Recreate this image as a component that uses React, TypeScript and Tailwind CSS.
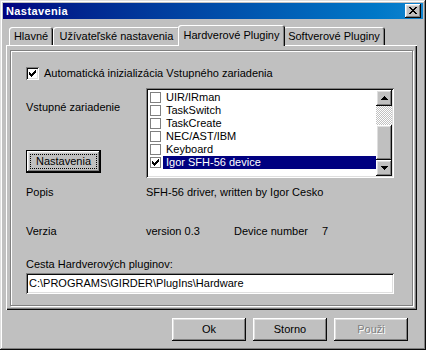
import React from 'react';

const raised =
  'shadow-[inset_-1px_-1px_#0a0a0a,inset_1px_1px_#fff,inset_-2px_-2px_#808080,inset_2px_2px_#dfdfdf]';
const sunken =
  'shadow-[inset_1px_1px_#808080,inset_-1px_-1px_#fff,inset_2px_2px_#0a0a0a,inset_-2px_-2px_#dfdfdf]';

const Check = () => (
  <svg width="7" height="7" viewBox="0 0 7 7" shapeRendering="crispEdges">
    <path d="M6 0h1v3H6v1H5v1H4v1H3v1H2V6H1V5H0V2h1v1h1v1h1V3h1V2h1V1h1z" fill="#000" />
  </svg>
);

const Arrow = ({ down }: { down?: boolean }) => (
  <svg width="7" height="4" viewBox="0 0 7 4" shapeRendering="crispEdges" className={down ? 'rotate-180' : ''}>
    <path d="M3 0h1v1h1v1h1v1h1v1H0V3h1V2h1V1h1z" fill="#000" />
  </svg>
);

const Tab = ({ w, children }: { w: string; children: React.ReactNode }) => (
  <div
    className={`${w} mt-[2px] h-[18px] flex items-center justify-center rounded-t-[3px] shadow-[inset_1px_1px_#fff,inset_-1px_0_#0a0a0a,inset_-2px_0_#808080] whitespace-nowrap`}
  >
    {children}
  </div>
);

const Button = ({ children, disabled }: { children: React.ReactNode; disabled?: boolean }) => (
  <div
    className={`w-[74px] h-[23px] bg-[#c0c0c0] ${raised} flex items-center justify-center ${
      disabled ? 'text-[#808080] [text-shadow:1px_1px_#fff]' : ''
    }`}
  >
    {children}
  </div>
);

const items = ['UIR/IRman', 'TaskSwitch', 'TaskCreate', 'NEC/AST/IBM', 'Keyboard', 'Igor SFH-56 device'];

export default function App() {
  return (
    <div className="w-[426px] h-[350px] bg-[#c0c0c0] p-[3px] flex flex-col font-['Liberation_Sans',Arial,sans-serif] text-[11px] leading-[13px] text-black shadow-[inset_-1px_-1px_#0a0a0a,inset_1px_1px_#dfdfdf,inset_-2px_-2px_#808080,inset_2px_2px_#fff] select-none">
      {/* title bar */}
      <div className="h-[16px] flex items-center justify-between pl-[3px] pr-[2px] bg-linear-to-r from-[#000080] to-[#1084d0]">
        <span className="text-white font-bold tracking-[0.4px]">Nastavenia</span>
        <div className={`w-[16px] h-[14px] bg-[#c0c0c0] ${raised} flex items-center justify-center pb-[1px]`}>
          <svg width="8" height="7" viewBox="0 0 8 7" shapeRendering="crispEdges">
            <path
              d="M0 0h2v1h1v1h2V1h1V0h2v1H7v1H6v1H5v1h1v1h1v1h1v1H6V6H5V5H3v1H2v1H0V6h1V5h1V4h1V3H2V2H1V1H0z"
              fill="#000"
            />
          </svg>
        </div>
      </div>

      {/* tab control */}
      <div className="mt-[6px] ml-[3px] w-[411px] flex flex-col">
        <div className="relative z-10 h-[20px] flex items-start pl-[3px]">
          <Tab w="w-[44px]">Hlavné</Tab>
          <Tab w="w-[127px]">Užívateľské nastavenia</Tab>
          <div className="relative z-10 w-[107px] -mx-[2px] h-[21px] pb-[1px] bg-[#c0c0c0] flex items-center justify-center rounded-t-[3px] shadow-[inset_1px_1px_#fff,inset_-1px_0_#0a0a0a,inset_-2px_0_#808080] whitespace-nowrap">
            Hardverové Pluginy
          </div>
          <Tab w="w-[102px]">Softverové Pluginy</Tab>
        </div>

        <div className="h-[265px] pt-[5px] px-[4px] pb-[4px] flex flex-col shadow-[inset_1px_1px_#fff,inset_-1px_-1px_#0a0a0a,inset_-2px_-2px_#808080]">
          <div className="flex-1 border border-[#808080] shadow-[inset_1px_1px_#fff,1px_1px_#fff] pt-[16px] pl-[15px] flex flex-col">
            <div className="h-[13px] flex items-center">
              <div className={`w-[13px] h-[13px] bg-white ${sunken} flex items-center justify-center`}>
                <Check />
              </div>
              <span className="ml-[5px]">Automatická inizializácia Vstupného zariadenia</span>
            </div>

            <div className="mt-[8px] h-[90px] flex">
              <div className="w-[120px] flex flex-col">
                <span className="mt-[13px]">Vstupné zariadenie</span>
                <div className="mt-auto mb-[5px] w-[75px] h-[23px] border border-black flex">
                  <div className={`flex-1 ${raised} p-[3px] flex`}>
                    <div className="flex-1 border border-dotted border-black flex items-center justify-center">
                      Nastavenia
                    </div>
                  </div>
                </div>
              </div>

              <div className={`w-[248px] h-[90px] bg-white ${sunken} p-[2px] flex`}>
                <div className="flex-1 pt-[1px] flex flex-col">
                  {items.map((label, i) => {
                    const sel = i === items.length - 1;
                    return (
                      <div key={label} className="h-[13px] flex items-center">
                        <div className="ml-[2px] w-[11px] h-[11px] border border-[#808080] bg-white flex items-center justify-center">
                          {sel && <Check />}
                        </div>
                        <div
                          className={`ml-[2px] flex-1 h-[13px] pl-[3px] flex items-center ${
                            sel ? 'bg-[#000080] text-white' : ''
                          }`}
                        >
                          {label}
                        </div>
                      </div>
                    );
                  })}
                </div>
                <div className="w-[16px] flex flex-col">
                  <div className={`h-[16px] bg-[#c0c0c0] ${raised} flex items-center justify-center`}>
                    <Arrow />
                  </div>
                  <div className="h-[19px] bg-[repeating-conic-gradient(#c0c0c0_0_25%,#fff_0_50%)] bg-[length:2px_2px]" />
                  <div className={`h-[35px] bg-[#c0c0c0] ${raised}`} />
                  <div className={`h-[16px] bg-[#c0c0c0] ${raised} flex items-center justify-center`}>
                    <Arrow down />
                  </div>
                </div>
              </div>
            </div>

            <div className="mt-[8px] h-[13px] flex">
              <span className="w-[120px]">Popis</span>
              <span>SFH-56 driver, written by Igor Cesko</span>
            </div>

            <div className="mt-[26px] h-[13px] flex">
              <span className="w-[120px]">Verzia</span>
              <span className="w-[88px]">version 0.3</span>
              <span className="w-[88px]">Device number</span>
              <span>7</span>
            </div>

            <div className="mt-[20px] h-[13px]">Cesta Hardverových pluginov:</div>

            <div className={`mt-[2px] w-[368px] h-[21px] bg-white ${sunken} pl-[3px] flex items-center`}>
              C:\PROGRAMS\GIRDER\PlugIns\Hardware
            </div>
          </div>
        </div>
      </div>

      {/* dialog buttons */}
      <div className="mt-[8px] flex justify-end gap-[7px] pr-[15px]">
        <Button>Ok</Button>
        <Button>Storno</Button>
        <Button disabled>Použi</Button>
      </div>
    </div>
  );
}
